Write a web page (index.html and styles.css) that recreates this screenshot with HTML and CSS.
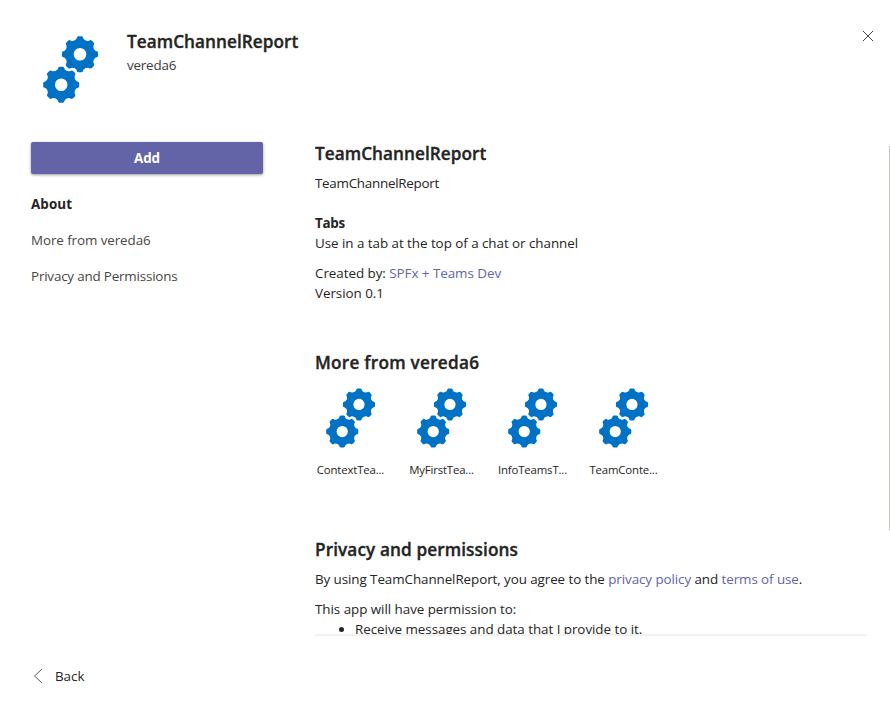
FILE: index.html
```html
<!DOCTYPE html>
<html lang="en">
<head>
<meta charset="utf-8">
<title>TeamChannelReport</title>
<link rel="stylesheet" href="styles.css">
</head>
<body>
<svg class="defs" aria-hidden="true">
  <defs>
    <path id="tooth" d="M-6.8-12 -5-14.2Q-3.6-14.9-3.3-16Q-3-18-1.6-18H1.6Q3-18 3.3-16Q3.6-14.9 5-14.2L6.8-12Z"/>
    <g id="gear">
      <path fill-rule="evenodd" d="M0-14.6A14.6 14.6 0 1 1 0 14.6 14.6 14.6 0 1 1 0-14.6ZM0-6.3A6.3 6.3 0 1 0 0 6.3 6.3 6.3 0 1 0 0-6.3Z"/>
      <use href="#tooth"/><use href="#tooth" transform="rotate(45)"/><use href="#tooth" transform="rotate(90)"/><use href="#tooth" transform="rotate(135)"/><use href="#tooth" transform="rotate(180)"/><use href="#tooth" transform="rotate(225)"/><use href="#tooth" transform="rotate(270)"/><use href="#tooth" transform="rotate(315)"/>
    </g>
    <symbol id="gears" viewBox="0 0 55 67"><use href="#gear" x="37" y="18.3"/><use href="#gear" x="18.2" y="48.7"/></symbol>
  </defs>
</svg>
<div class="dialog">
  <header class="header">
    <svg class="logo"><use href="#gears"/></svg>
    <div class="heading">
      <h1>TeamChannelReport</h1>
      <p>vereda6</p>
    </div>
    <svg class="close" viewBox="0 0 12 12"><path d="M1 1l10 10M11 1L1 11"/></svg>
  </header>
  <div class="main">
    <nav class="side">
      <button class="add">Add</button>
      <a class="nav active">About</a>
      <a class="nav">More from vereda6</a>
      <a class="nav nav-privacy">Privacy and Permissions</a>
    </nav>
    <div class="content">
      <section class="about">
        <h2>TeamChannelReport</h2>
        <p class="summary">TeamChannelReport</p>
        <h3>Tabs</h3>
        <p class="use">Use in a tab at the top of a chat or channel</p>
        <p>Created by: <a>SPFx + Teams Dev</a></p>
        <p>Version 0.1</p>
      </section>
      <section class="more">
        <h2 class="more-title">More from vereda6</h2>
        <div class="apps">
          <div class="app"><svg><use href="#gears"/></svg><span>ContextTea...</span></div>
          <div class="app"><svg><use href="#gears"/></svg><span>MyFirstTea...</span></div>
          <div class="app"><svg><use href="#gears"/></svg><span>InfoTeamsT...</span></div>
          <div class="app"><svg><use href="#gears"/></svg><span>TeamConte...</span></div>
        </div>
      </section>
      <section class="privacy">
        <h2 class="privacy-title">Privacy and permissions</h2>
        <p class="agree">By using TeamChannelReport, you agree to the <a>privacy policy</a> and <a>terms of use</a>.</p>
        <p>This app will have permission to:</p>
        <ul><li>Receive messages and data that I provide to it.</li></ul>
      </section>
    </div>
    <div class="thumb"></div>
  </div>
  <footer class="footer">
    <svg viewBox="0 0 10 16"><path d="M9 1L1.5 8 9 15"/></svg>
    <span>Back</span>
  </footer>
</div>
</body>
</html>
```
FILE: styles.css
```css
* { box-sizing: border-box; margin: 0; padding: 0; }
body { background: #fff; color: #252423; font: 13.4px/20px "Open Sans", sans-serif; letter-spacing: -.04px; white-space: nowrap; overflow: hidden; }
.defs { position: absolute; width: 0; height: 0; }
.dialog { width: 890px; height: 712px; display: flex; flex-direction: column; }
.header { height: 142px; display: flex; align-items: flex-start; padding: 30px 16px 0 43px; }
.logo { width: 55px; height: 67px; margin-top: 6px; fill: #0072c6; flex: none; }
.heading { flex: 1; margin-left: 29px; }
h1, h2 { font-size: 17.2px; line-height: 24px; font-weight: 600; letter-spacing: .04px; -webkit-text-stroke: .35px #252423; }
.more-title { letter-spacing: .25px; }
.privacy-title { letter-spacing: .1px; }
.heading p { margin-top: 1px; color: #3b3a39; letter-spacing: -.2px; }
.close { width: 12px; height: 12px; fill: none; stroke: #484644; stroke-width: 1; }
.main { display: flex; height: 494px; }
.side { width: 232px; margin-left: 31px; display: flex; flex-direction: column; }
.add { height: 32px; border: 0; border-radius: 2px; background: #6264a7; color: #fff; font: 700 13.4px/20px "Open Sans", sans-serif; box-shadow: 0 1px 3px rgba(0,0,0,.4); margin-bottom: 20px; }
.nav { height: 20px; margin-bottom: 16px; color: #484644; letter-spacing: -.08px; }
.nav-privacy { letter-spacing: -.18px; }
.active { font-weight: 700; color: #252423; letter-spacing: .1px; }
.content { width: 552px; height: 494px; margin-left: 52px; overflow: hidden; border-bottom: 2px solid #f3f2f1; }
.content a { color: #6264a7; }
.summary { margin: 7px 0 20px; letter-spacing: -.26px; }
h3 { font-size: 13.4px; line-height: 20px; font-weight: 700; letter-spacing: -.3px; }
.use { margin-bottom: 10px; }
.more { margin-top: 48px; }
.apps { display: flex; margin-top: 13px; }
.app { width: 71px; margin-right: 20px; display: flex; flex-direction: column; align-items: center; font-size: 11.4px; line-height: 16px; letter-spacing: -.16px; }
.app svg { width: 49px; height: 60px; fill: #0072c6; margin-bottom: 14px; }
.privacy { margin-top: 60px; }
.agree { margin: 7px 0 10px; letter-spacing: -.075px; }
ul { padding-left: 40px; }
.thumb { width: 1px; height: 384px; margin: 4px 0 0 22px; background: #c8c6c4; }
.footer { display: flex; align-items: center; height: 40px; margin-top: 20px; padding-left: 33px; }
.footer svg { width: 10px; height: 16px; margin-right: 12px; fill: none; stroke: #605e5c; stroke-width: 1; }
```
